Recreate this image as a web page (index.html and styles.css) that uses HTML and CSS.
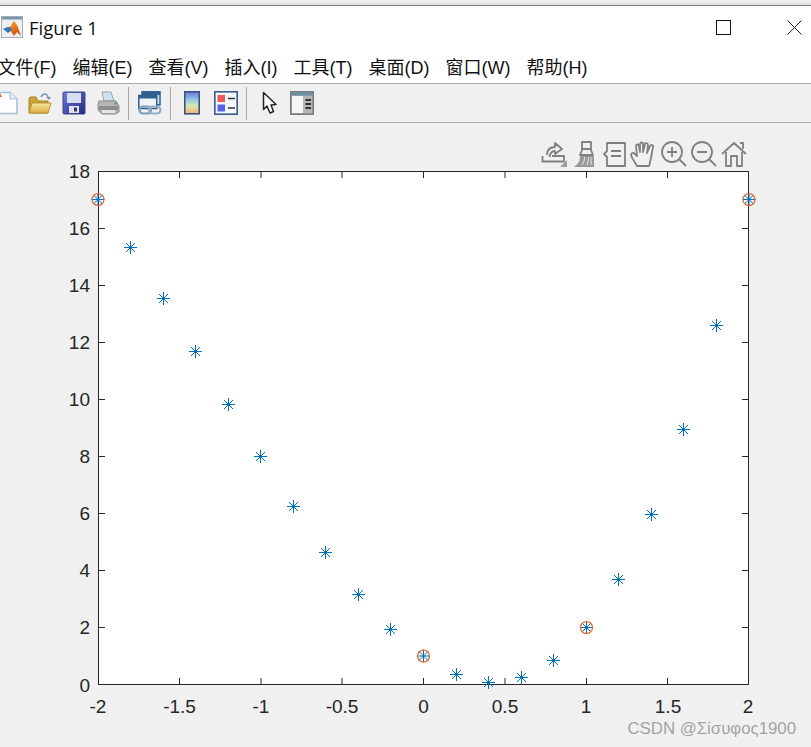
FILE: index.html
```html
<!DOCTYPE html>
<html lang="en">
<head>
<meta charset="UTF-8">
<meta name="viewport" content="width=device-width, initial-scale=1.0">
<title>Figure 1</title>
<link rel="stylesheet" href="styles.css">
</head>
<body>

<div class="window">
  <div class="top-strip"></div>

  <div class="titlebar">
    <svg class="app-icon" width="22" height="22" viewBox="0 0 22 22">
      <defs>
        <linearGradient id="peak" x1="0" y1="0" x2="1" y2="1">
          <stop offset="0" stop-color="#f0c030"/>
          <stop offset="0.5" stop-color="#ee7a1c"/>
          <stop offset="1" stop-color="#b83a10"/>
        </linearGradient>
      </defs>
      <rect x="0.5" y="0.5" width="21" height="21" fill="#f0f0f0" stroke="#a8adb2"/>
      <rect x="1" y="1" width="20" height="2.5" fill="#7d95ad"/>
      <path d="M2 13 L7 11 L9 11 L13 5 L16 9 L20 20 L16 16 L13 20 L9 14 Z" fill="url(#peak)"/>
      <path d="M2 13 L7 11 L9 11 L11 14 L7 17 Z" fill="#2f78c4"/>
    </svg>
    <span class="title-text">Figure 1</span>
    <div class="win-controls">
      <svg width="15" height="15" viewBox="0 0 15 15"><rect x="0.5" y="0.5" width="14" height="14" fill="none" stroke="#111"/></svg>
      <svg width="15" height="15" viewBox="0 0 15 15"><path d="M0.5 0.5 L14.5 14.5 M14.5 0.5 L0.5 14.5" fill="none" stroke="#222"/></svg>
    </div>
  </div>

  <div class="menubar">
    <span>文件(F)</span>
    <span>编辑(E)</span>
    <span>查看(V)</span>
    <span>插入(I)</span>
    <span>工具(T)</span>
    <span>桌面(D)</span>
    <span>窗口(W)</span>
    <span>帮助(H)</span>
  </div>

  <div class="toolbar">
    <div class="tool"><svg width="24" height="24" viewBox="0 0 24 24">
      <path d="M1 1.5 H16 L23 8 V22.5 H1 Z" fill="#fdfdfd" stroke="#a9bfd8" stroke-width="1.5"/>
      <path d="M16 1.5 V8 H23" fill="#e6edf5" stroke="#a9bfd8"/>
      <path d="M6 2 L8 6 L4 6 Z" fill="#e8603c"/>
    </svg></div>
    <div class="tool"><svg width="24" height="24" viewBox="0 0 24 24">
      <defs>
        <linearGradient id="folder" x1="0" y1="0" x2="0" y2="1">
          <stop offset="0" stop-color="#f8e8a8"/>
          <stop offset="1" stop-color="#dcae3c"/>
        </linearGradient>
      </defs>
      <path d="M1 8 V22 H20 V10 H10 L8 6 H2 Z" fill="#cfa23a" stroke="#a8842c"/>
      <path d="M1 22 L4 12 H23 L20 22 Z" fill="url(#folder)" stroke="#b8922f"/>
      <path d="M13 6 C15 2 19 2 20 6" fill="none" stroke="#7f98b0" stroke-width="1.6"/>
      <path d="M18 6 H23 L21 9 Z" fill="#7f98b0"/>
    </svg></div>
    <div class="tool"><svg width="24" height="24" viewBox="0 0 24 24">
      <defs>
        <linearGradient id="disk" x1="0" y1="0" x2="1" y2="1">
          <stop offset="0" stop-color="#6f7ce0"/>
          <stop offset="1" stop-color="#22277a"/>
        </linearGradient>
      </defs>
      <rect x="1" y="1" width="22" height="22" rx="1" fill="url(#disk)" stroke="#3d4590"/>
      <rect x="5" y="2" width="14" height="10" fill="#d8dcf4"/>
      <rect x="7" y="15" width="10" height="7" fill="#dfe2ee"/>
      <rect x="12" y="16.5" width="3" height="4" fill="#30357c"/>
    </svg></div>
    <div class="tool"><svg width="24" height="24" viewBox="0 0 24 24">
      <path d="M6 1 H15 L18 10 H8 Z" fill="#cfe0f0" stroke="#9aa5ae"/>
      <path d="M3 10 H20 L23 15 V21 L19 23 H6 L2 19 V13 Z" fill="#b6b6b6" stroke="#8a8a8a"/>
      <path d="M3 15 H22 V19 H3 Z" fill="#8c8c8c"/>
      <rect x="18" y="12" width="3" height="1.6" fill="#58a860"/>
      <path d="M6 19 H19 V22 H6 Z" fill="#e4e4e4"/>
    </svg></div>
    <div class="tool-sep"></div>
    <div class="tool"><svg width="24" height="24" viewBox="0 0 24 24">
      <rect x="4" y="0.8" width="18" height="13" fill="#dfe8f2" stroke="#2f5f8f" stroke-width="1.5"/>
      <rect x="4" y="1" width="18" height="3" fill="#2f5f8f"/>
      <rect x="0.8" y="4.5" width="18" height="13" fill="#eef3f8" stroke="#2f5f8f" stroke-width="1.5"/>
      <rect x="0.8" y="4.5" width="18" height="3" fill="#2f5f8f"/>
      <rect x="1.5" y="15.5" width="11.5" height="7" rx="3.5" fill="none" stroke="#7f9dbc" stroke-width="2.2"/>
      <rect x="11" y="15.5" width="11.5" height="7" rx="3.5" fill="none" stroke="#94aec8" stroke-width="2.2"/>
    </svg></div>
    <div class="tool-sep"></div>
    <div class="tool"><svg width="24" height="24" viewBox="0 0 24 24">
      <defs>
        <linearGradient id="cbar" x1="0" y1="0" x2="0" y2="1">
          <stop offset="0" stop-color="#6d78d8"/>
          <stop offset="0.35" stop-color="#8fc8e8"/>
          <stop offset="0.65" stop-color="#d8eca8"/>
          <stop offset="1" stop-color="#f0a878"/>
        </linearGradient>
      </defs>
      <rect x="4.8" y="0.8" width="14.4" height="22" fill="url(#cbar)" stroke="#3f5480" stroke-width="1.6"/>
    </svg></div>
    <div class="tool"><svg width="24" height="24" viewBox="0 0 24 24">
      <rect x="0.8" y="0.8" width="22.4" height="22.4" fill="#f4f7fb" stroke="#3a5a88" stroke-width="1.6"/>
      <rect x="3.5" y="4" width="7.5" height="7" fill="#ee5a5a"/>
      <rect x="3.5" y="13.5" width="7.5" height="7" fill="#5a62e8"/>
      <path d="M14 7.5 H21 M14 17 H21" stroke="#333" stroke-width="1.6"/>
    </svg></div>
    <div class="tool-sep"></div>
    <div class="tool"><svg width="24" height="24" viewBox="0 0 24 24">
      <path d="M7.5 1.5 V18.5 L11 15 L14 22 L17.5 20.5 L15 14 L20 13.5 Z" fill="#fff" stroke="#222" stroke-width="1.5" stroke-linejoin="round"/>
    </svg></div>
    <div class="tool"><svg width="24" height="24" viewBox="0 0 24 24">
      <rect x="0.8" y="0.8" width="22.4" height="22.4" fill="#b4b4b4" stroke="#7c7c7c" stroke-width="1.6"/>
      <rect x="1" y="1" width="22" height="3.5" fill="#6d8fa4"/>
      <rect x="2" y="5" width="11" height="17" fill="#f6f6f6"/>
      <path d="M15.5 9 H21 M15.5 13 H21 M15.5 17 H21" stroke="#333" stroke-width="1.8"/>
    </svg></div>
  </div>

  <div class="figure">
    <svg class="plot" width="811" height="624" viewBox="0 123 811 624">
      <defs>
        <g id="star">
          <path d="M0 -6.5 V6.5 M-6.5 0 H6.5 M-4.5 -4.5 L4.5 4.5 M-4.5 4.5 L4.5 -4.5"/>
        </g>
      </defs>

      <rect class="axes-bg" x="98" y="171.5" width="651" height="513"/>

      <path class="axes-line" d="
        M98.5 678 V684.5 M179.5 678 V684.5 M261 678 V684.5 M342 678 V684.5 M423.5 678 V684.5 M505 678 V684.5 M586.5 678 V684.5 M667.5 678 V684.5
        M179.5 171.5 V178 M261 171.5 V178 M342 171.5 V178 M423.5 171.5 V178 M505 171.5 V178 M586.5 171.5 V178 M667.5 171.5 V178
        M98.5 627.5 H105 M98.5 570.5 H105 M98.5 513.5 H105 M98.5 456.5 H105 M98.5 399.5 H105 M98.5 342.5 H105 M98.5 285.5 H105 M98.5 228.5 H105
        M742 627.5 H748.5 M742 570.5 H748.5 M742 513.5 H748.5 M742 456.5 H748.5 M742 399.5 H748.5 M742 342.5 H748.5 M742 285.5 H748.5 M742 228.5 H748.5"/>
      <rect class="axes-line" x="98.5" y="171.5" width="650" height="513"/>

      <g class="tick-y">
        <text x="90" y="178">18</text>
        <text x="90" y="235">16</text>
        <text x="90" y="292">14</text>
        <text x="90" y="349">12</text>
        <text x="90" y="406">10</text>
        <text x="90" y="463">8</text>
        <text x="90" y="520">6</text>
        <text x="90" y="577">4</text>
        <text x="90" y="634">2</text>
        <text x="90" y="692">0</text>
      </g>
      <g class="tick-x">
        <text x="98" y="713">-2</text>
        <text x="179.5" y="713">-1.5</text>
        <text x="261" y="713">-1</text>
        <text x="342" y="713">-0.5</text>
        <text x="423.5" y="713">0</text>
        <text x="505" y="713">0.5</text>
        <text x="586" y="713">1</text>
        <text x="668" y="713">1.5</text>
        <text x="748" y="713">2</text>
      </g>

      <g class="samples">
        <use href="#star" x="98" y="199.5"/>
        <use href="#star" x="130.5" y="247.5"/>
        <use href="#star" x="163.5" y="298.5"/>
        <use href="#star" x="195.5" y="351.5"/>
        <use href="#star" x="228.5" y="404.5"/>
        <use href="#star" x="260.5" y="456.5"/>
        <use href="#star" x="293.5" y="506.5"/>
        <use href="#star" x="325.5" y="552.5"/>
        <use href="#star" x="358.5" y="594.5"/>
        <use href="#star" x="390.5" y="629.5"/>
        <use href="#star" x="423.5" y="656"/>
        <use href="#star" x="456.5" y="674.5"/>
        <use href="#star" x="488.5" y="682.5"/>
        <use href="#star" x="521.5" y="677.5"/>
        <use href="#star" x="553.5" y="660.5"/>
        <use href="#star" x="586.5" y="627.5"/>
        <use href="#star" x="618.5" y="579.5"/>
        <use href="#star" x="651.5" y="514.5"/>
        <use href="#star" x="683.5" y="429.5"/>
        <use href="#star" x="716.5" y="325.5"/>
        <use href="#star" x="749" y="199.5"/>
      </g>
      <g class="knots">
        <circle cx="98" cy="199.5" r="6"/>
        <circle cx="423.5" cy="656" r="6"/>
        <circle cx="586.5" cy="627.5" r="6"/>
        <circle cx="749" cy="199.5" r="6"/>
      </g>
    </svg>

    <div class="axes-tools">
      <svg width="30" height="28" viewBox="0 0 30 28">
        <path d="M3.5 16 V21.5 H25 V16 H13 M8 15 C8 9 12 7 16 7 V3 L23 9 L16 14 V11 C13 11 11 13 10.5 17"/>
        <path class="solid" d="M28 20 V27 H21 Z"/>
      </svg>
      <svg width="30" height="28" viewBox="0 0 30 28">
        <path d="M13 2 H22 V10 L24 15 H11 L13 10 Z M13 9 H22"/>
        <path class="solid" d="M11 16 H25 V27 H5 C9 24 11 21 11 16 Z"/>
        <path class="streak" d="M13 25 C15 22 15.5 20 15.5 17 M18 25 C19 22 19.5 20 19.5 17 M22 25 V17"/>
      </svg>
      <svg width="30" height="28" viewBox="0 0 30 28">
        <path d="M8 3 H26 V26 H8 V17 L5 14 L8 11 Z M12 11 H22 M12 16 H22"/>
      </svg>
      <svg width="30" height="28" viewBox="0 0 30 28">
        <path d="M8 26 C6 22 3 19 2 15 C2 13 4 12 6 14 L8 16 L7 6 C7 4 10 4 10 6 L11 12 V4 C11 2 14 2 14 4 V12 L16 4 C16 2 19 3 19 5 L18 13 L21 6 C22 4 25 5 24 7 L22 18 C21 21 21 24 20 26 Z"/>
      </svg>
      <svg width="30" height="28" viewBox="0 0 30 28">
        <circle cx="13" cy="12" r="10"/>
        <path d="M13 7 V17 M8 12 H18 M20 19 L27 26"/>
      </svg>
      <svg width="30" height="28" viewBox="0 0 30 28">
        <circle cx="13" cy="12" r="10"/>
        <path d="M8 12 H18 M20 19 L27 26"/>
      </svg>
      <svg width="30" height="28" viewBox="0 0 30 28">
        <path d="M3 14 L15 3 L27 14 M7 12 V26 H12 V16 H18 V26 H23 V12 M21 3 H24 V9"/>
      </svg>
    </div>

    <div class="watermark">CSDN @Σίσυφος1900</div>
  </div>
</div>

</body>
</html>
```

FILE: styles.css
```css
body {
  margin: 0;
  background-color: #f0f0f0;
  overflow: hidden;
}
.window {
  width: 811px;
  height: 747px;
  display: flex;
  flex-direction: column;
  overflow: hidden;
}
.top-strip {
  height: 5px;
  background: linear-gradient(#f2f2f2, #dcdcdc);
  border-bottom: 1px solid #808080;
}
.titlebar {
  height: 42px;
  background-color: #fff;
  display: flex;
  align-items: center;
  padding-left: 1px;
}
.app-icon {
  flex: none;
}
.title-text {
  margin-left: 6px;
  font-family: "Open Sans", sans-serif;
  font-size: 18.5px;
  color: #111;
}
.win-controls {
  margin-left: auto;
  margin-right: 9px;
  display: flex;
  gap: 56px;
}
.menubar {
  height: 35px;
  background-color: #fff;
  border-bottom: 1px solid #ababab;
  display: flex;
  align-items: center;
  gap: 16px;
  margin-left: -2.5px;
  font-family: "Liberation Sans", "Noto Sans CJK SC", sans-serif;
  font-size: 18px;
  color: #111;
}
.toolbar {
  height: 38px;
  background-color: #f0f0f0;
  border-bottom: 1px solid #ababab;
  display: flex;
  align-items: center;
  margin-left: -11px;
}
.tool {
  width: 34px;
  height: 24px;
  display: flex;
  justify-content: center;
}
.tool-sep {
  width: 1px;
  height: 33px;
  margin: 0 4px 0 3px;
  background-color: #a8a8a8;
}
.figure {
  position: relative;
  flex: 1;
  background-color: #f0f0f0;
}
.plot {
  display: block;
}
.axes-bg {
  fill: #fff;
}
.axes-line {
  fill: none;
  stroke: #262626;
  stroke-width: 1;
}
.tick-y text,
.tick-x text {
  font-family: "Liberation Sans", sans-serif;
  font-size: 19px;
  fill: #262626;
}
.tick-y text {
  text-anchor: end;
}
.tick-x text {
  text-anchor: middle;
}
.samples {
  fill: none;
  stroke: #0072bd;
  stroke-width: 1;
}
.knots {
  fill: none;
  stroke: #e0642a;
  stroke-width: 1.2;
}
.axes-tools {
  position: absolute;
  top: 17px;
  left: 539px;
  display: flex;
}
.axes-tools path,
.axes-tools circle {
  fill: none;
  stroke: #808080;
  stroke-width: 1.8;
  stroke-linejoin: round;
}
.axes-tools path.solid {
  fill: #9a9a9a;
  stroke: none;
}
.axes-tools path.streak {
  stroke: #e4e4e4;
  stroke-width: 1;
}
.watermark {
  position: absolute;
  right: 15px;
  bottom: 8px;
  font-family: "Liberation Sans", sans-serif;
  font-size: 16.8px;
  color: #a0a0a0;
  text-shadow: 0 0 1px #fff;
}
```
